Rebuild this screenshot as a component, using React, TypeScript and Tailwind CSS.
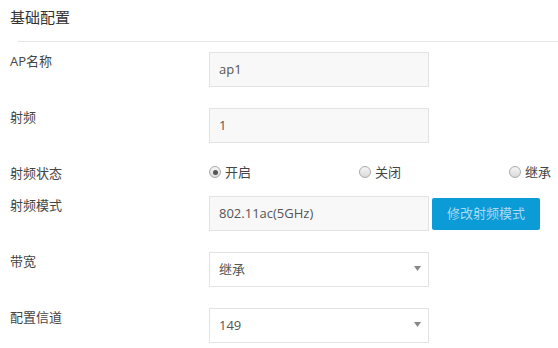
import React, { useState } from "react";

const FONT = { fontFamily: '"Open Sans", "Noto Sans CJK SC", sans-serif' };

const Field: React.FC<{ label: string; children: React.ReactNode; className?: string }> = ({ label, children, className }) => (
  <div className={`flex items-start ${className ?? ""}`}>
    <div className="w-[199px] shrink-0 pt-px text-[13px] leading-[16px] text-[#444]">{label}</div>
    {children}
  </div>
);

const TextBox: React.FC<{ value: string }> = ({ value }) => (
  <div className="flex h-[35px] w-[220px] items-center border border-[#e3e3e3] bg-[#f8f8f8] px-[9px] text-[13px] text-[#555]">
    {value}
  </div>
);

const SelectBox: React.FC<{ value: string }> = ({ value }) => (
  <div className="flex h-[35px] w-[220px] items-center justify-between border border-[#e3e3e3] bg-white pl-[9px] pr-[7px] text-[13px] text-[#555]">
    <span>{value}</span>
    <svg width="7" height="5" viewBox="0 0 7 5" className="mb-[2px]">
      <path d="M0 0h7L3.5 5z" fill="#888" />
    </svg>
  </div>
);

const RADIOS = ["开启", "关闭", "继承"];

const App: React.FC = () => {
  const [radio, setRadio] = useState("开启");

  return (
    <div className="h-[348px] w-[558px] overflow-hidden bg-white" style={FONT}>
      <div className="px-[10px] pt-[7px] text-[15px] leading-[20px] text-[#333]">基础配置</div>
      <div className="ml-[18px] mt-[14px] border-t border-[#e6e6e6]" />

      <div className="pl-[10px] pt-[10px]">
        <Field label="AP名称" className="mb-[21px]">
          <TextBox value="ap1" />
        </Field>
        <Field label="射频" className="mb-[21px]">
          <TextBox value="1" />
        </Field>
        <Field label="射频状态" className="h-[32px]">
          <div className="flex">
            {RADIOS.map((r) => (
              <button
                key={r}
                onClick={() => setRadio(r)}
                className="flex w-[150px] items-center gap-[4px] text-[13px] leading-[16px] text-[#444]"
              >
                <span className="flex h-[12px] w-[12px] items-center justify-center rounded-full border border-[#aaa] bg-gradient-to-b from-[#f6f6f6] to-[#dadada]">
                  {radio === r && <span className="h-[5px] w-[5px] rounded-full bg-[#555]" />}
                </span>
                {r}
              </button>
            ))}
          </div>
        </Field>
        <Field label="射频模式" className="mb-[21px]">
          <TextBox value="802.11ac(5GHz)" />
          <button className="ml-[3px] mt-[2px] h-[32px] w-[108px] rounded-[2px] bg-[#0b9bd7] text-[13px] text-[#a9daf1]">
            修改射频模式
          </button>
        </Field>
        <Field label="带宽" className="mb-[21px]">
          <SelectBox value="继承" />
        </Field>
        <Field label="配置信道">
          <SelectBox value="149" />
        </Field>
      </div>
    </div>
  );
};

export default App;
